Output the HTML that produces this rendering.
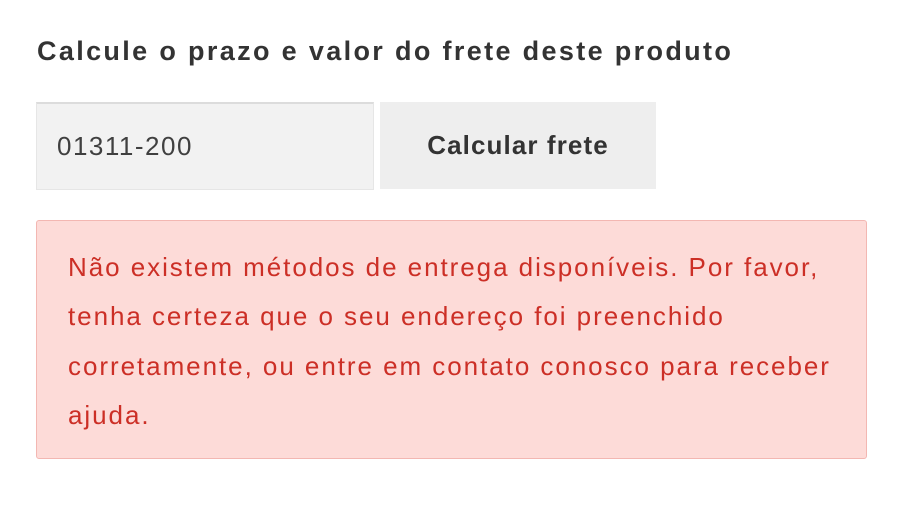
<!DOCTYPE html>
<html><head><meta charset="utf-8"><style>
body{margin:0;width:900px;height:510px;background:#fff;font-family:"Liberation Sans",sans-serif;position:relative;overflow:hidden}
.t{position:absolute;left:37px;top:36px;font-size:27px;letter-spacing:2.35px;font-weight:bold;color:#333;white-space:nowrap}
.in{position:absolute;left:36px;top:102px;width:336px;height:85px;background:#f2f2f2;border:1px solid #e6e6e6;border-top:2px solid #dcdcdc;box-sizing:content-box}
.in span{position:absolute;left:20px;top:27px;font-size:26px;letter-spacing:1.5px;color:#404040}
.b{position:absolute;left:380px;top:102px;width:276px;height:87px;background:#eeeeee;font-size:26px;letter-spacing:1.1px;font-weight:bold;color:#333;text-align:center;line-height:87px}
.a{position:absolute;left:36px;top:220px;width:829px;height:237px;background:#fddbd8;border:1px solid #f3b7b2;border-radius:3px}
.a p{margin:0;position:absolute;left:31px;top:22px;width:800px;font-size:26px;letter-spacing:1.95px;line-height:49.3px;color:#cc2f26;white-space:nowrap}
</style></head><body>
<div class="t">Calcule o prazo e valor do frete deste produto</div>
<div class="in"><span>01311-200</span></div>
<div class="b">Calcular frete</div>
<div class="a"><p>Não existem métodos de entrega disponíveis. Por favor,<br>tenha certeza que o seu endereço foi preenchido<br>corretamente, ou entre em contato conosco para receber<br>ajuda.</p></div>
</body></html>
